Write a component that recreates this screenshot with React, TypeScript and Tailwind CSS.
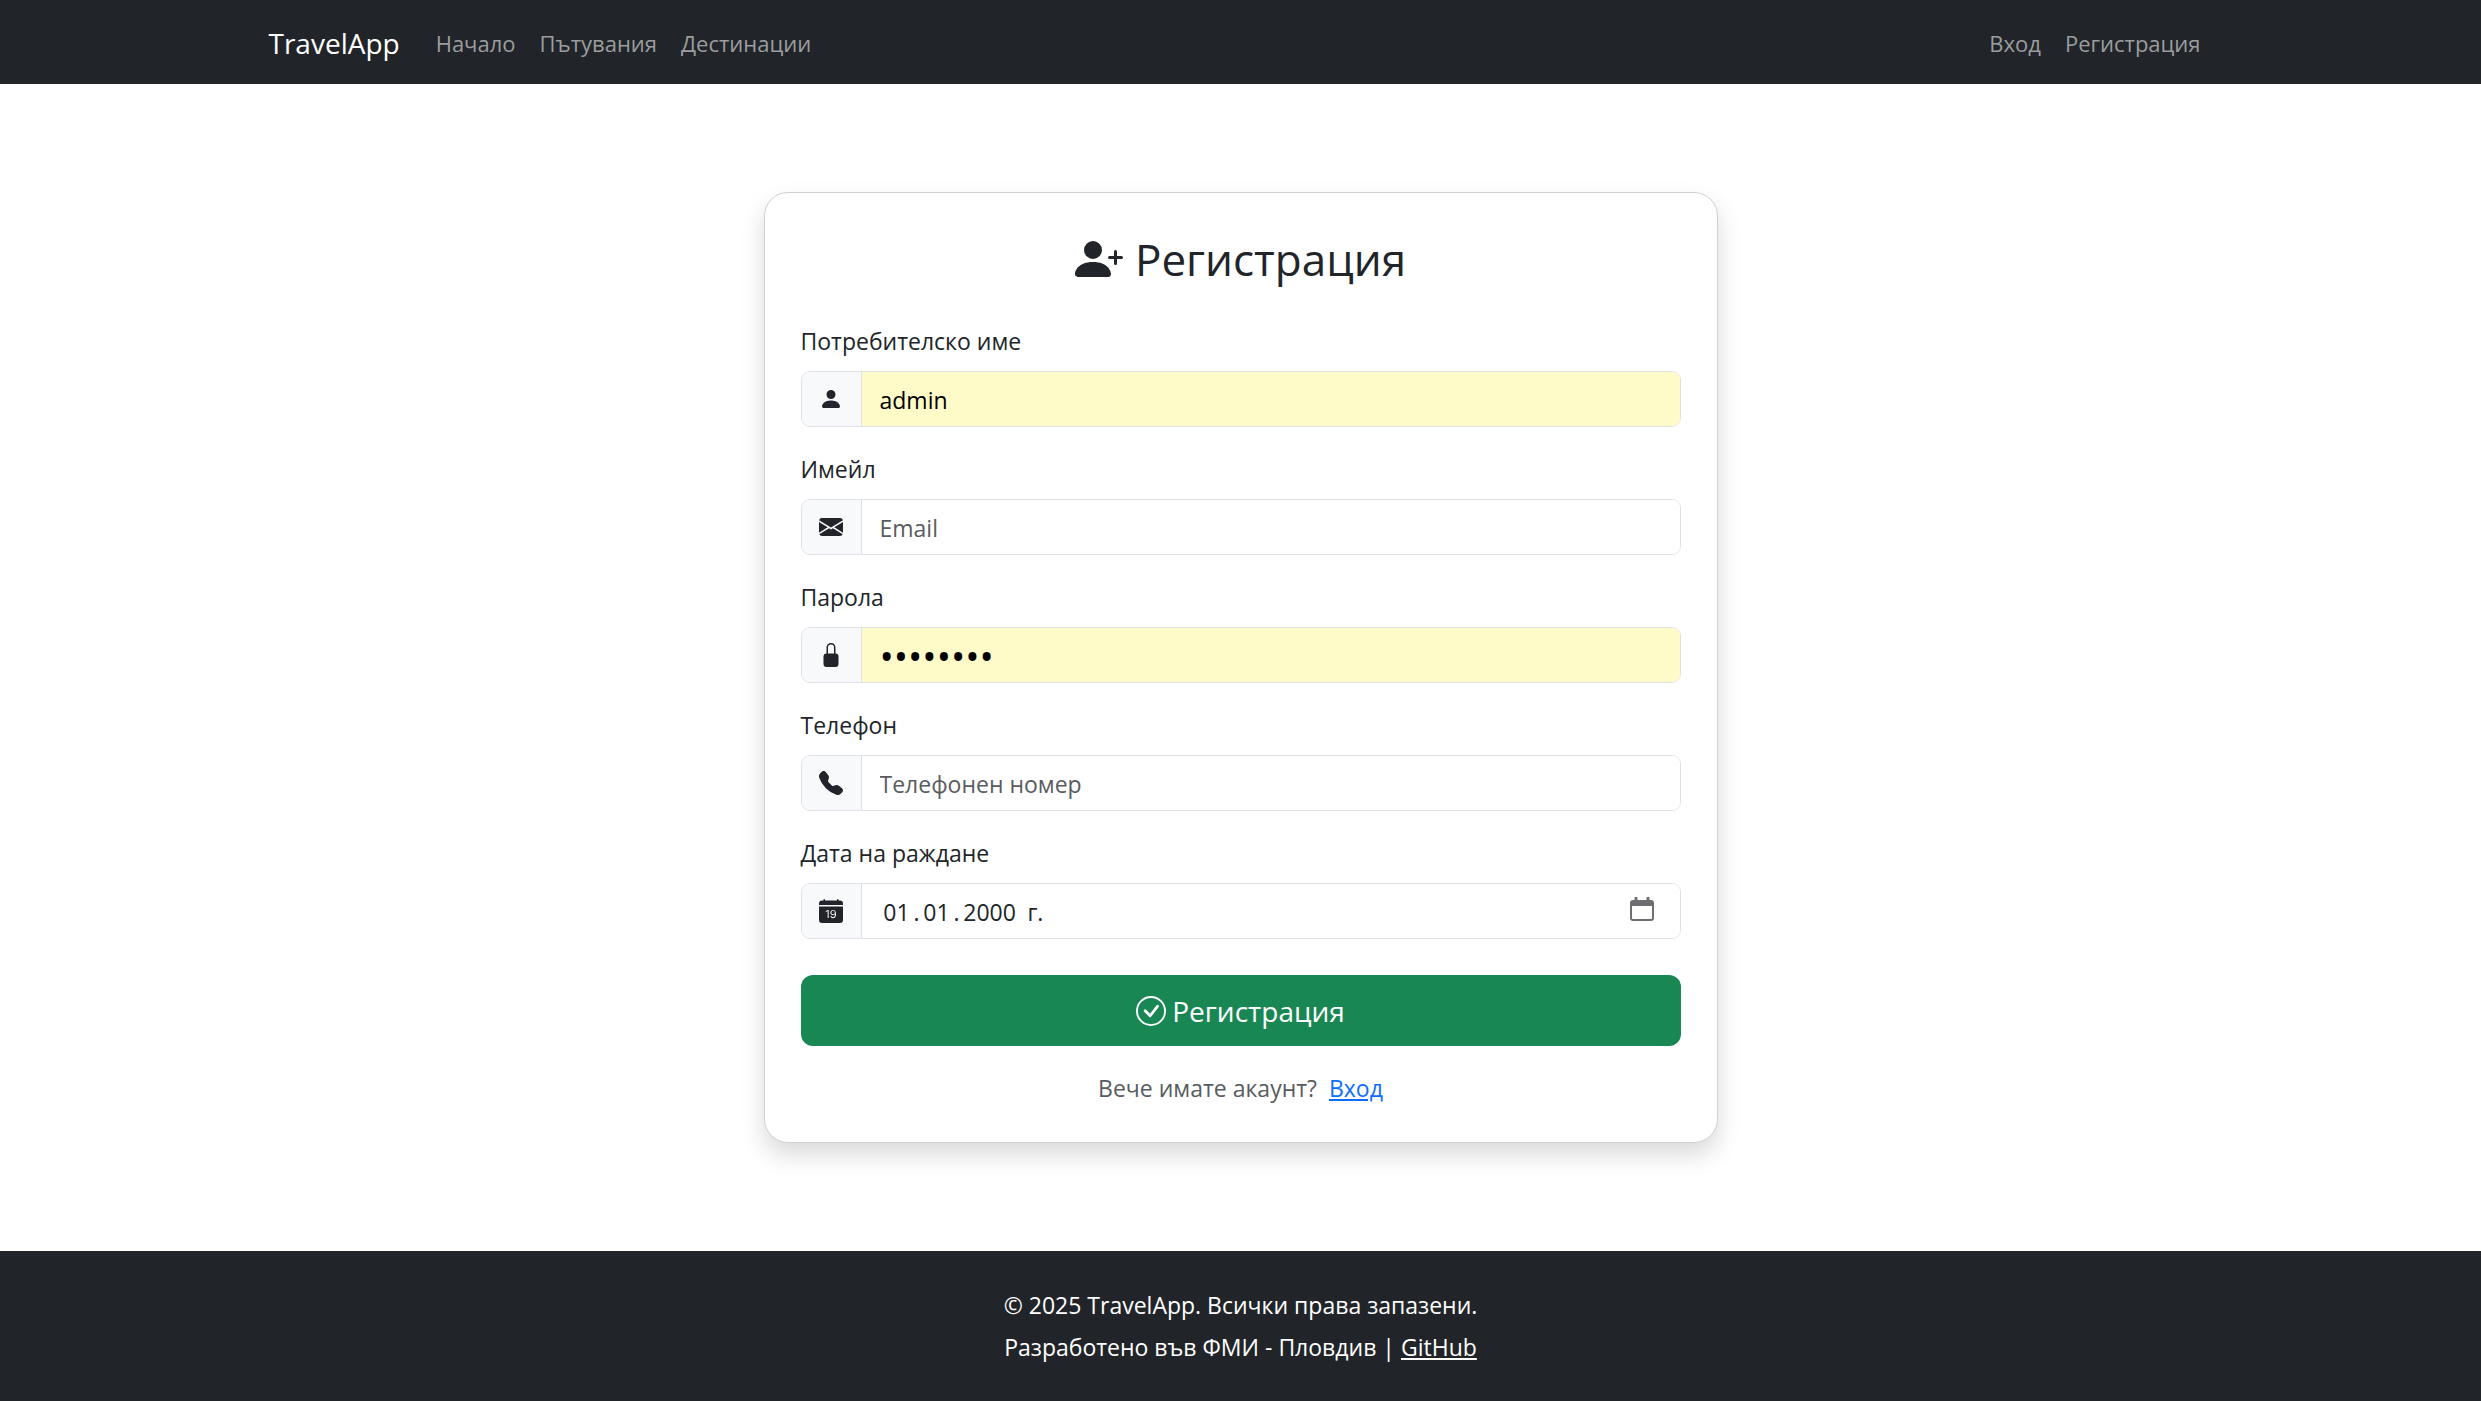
import type { InputHTMLAttributes, ReactNode } from "react";
import {
  BsCalendarDateFill,
  BsCheckCircle,
  BsEnvelopeFill,
  BsLockFill,
  BsPersonFill,
  BsPersonPlusFill,
  BsTelephoneFill,
} from "react-icons/bs";

type FieldProps = InputHTMLAttributes<HTMLInputElement> & {
  id: string;
  label: string;
  icon: ReactNode;
  filled?: boolean;
  action?: ReactNode;
};

function Field({ id, label, icon, filled, action, ...input }: FieldProps) {
  return (
    <div className="mb-6">
      <label htmlFor={id} className="mb-3 block">
        {label}
      </label>
      <div className="flex h-14 overflow-hidden rounded-[9px] border border-[#dee2e6]">
        <span className="flex w-[60px] shrink-0 items-center justify-center border-r border-[#dee2e6] bg-[#f8f9fa] text-2xl">
          {icon}
        </span>
        <div className={filled ? "flex min-w-0 flex-1 items-center bg-[#fffbc8] text-black" : "flex min-w-0 flex-1 items-center bg-white"}>
          <input
            id={id}
            className={
              input.type === "password"
                ? "h-full min-w-0 flex-1 bg-transparent px-[18px] pt-0.5 text-[38px] outline-none"
                : "h-full min-w-0 flex-1 bg-transparent px-[18px] pt-0.5 outline-none placeholder:text-[#595c5f]"
            }
            {...input}
          />
          {action}
        </div>
      </div>
    </div>
  );
}

function PickerIcon() {
  return (
    <svg viewBox="0 0 24 24" className="size-6" fill="#6e6f73" aria-hidden="true">
      <path
        fillRule="evenodd"
        d="M4.500 1.200a1.500 1.500 0 0 1 3 0V3h9V1.200a1.500 1.500 0 0 1 3 0V3H21a3 3 0 0 1 3 3v15a3 3 0 0 1-3 3H3a3 3 0 0 1-3-3V6a3 3 0 0 1 3-3h1.500zM2 9v12a1 1 0 0 0 1 1h18a1 1 0 0 0 1-1V9z"
      />
    </svg>
  );
}

const navLink = "px-3 py-3 text-[#9b9d9e] hover:text-white";

export default function App() {
  return (
    <div className="flex min-h-screen flex-col bg-white font-['Open_Sans','Noto_Sans',sans-serif] text-[23px] leading-9 text-[#212529]">
      <header className="bg-[#212529]">
        <nav className="mx-auto flex h-[84px] max-w-[1980px] items-center px-[18px] pt-0.5 text-[22px]">
          <a href="#" className="mr-6 text-[28px] text-white">
            TravelApp
          </a>
          <a href="#" className={navLink}>Начало</a>
          <a href="#" className={navLink}>Пътувания</a>
          <a href="#" className={navLink}>Дестинации</a>
          <a href="#" className={`${navLink} ml-auto`}>Вход</a>
          <a href="#" className={navLink}>Регистрация</a>
        </nav>
      </header>

      <main className="flex flex-1 items-center justify-center">
        <section className="w-full max-w-[954px] rounded-3xl border border-[#d0d1d2] bg-white p-9 shadow-[0_12px_24px_rgba(0,0,0,0.15)]">
          <h1 className="mb-9 flex items-center justify-center gap-3 pt-0.5 text-[44px] leading-[56px]">
            <BsPersonPlusFill className="size-12" aria-hidden="true" />
            <span>Регистрация</span>
          </h1>
          <form onSubmit={(e) => e.preventDefault()}>
            <Field id="username" label="Потребителско име" icon={<BsPersonFill />} filled defaultValue="admin" />
            <Field id="email" label="Имейл" icon={<BsEnvelopeFill />} type="email" placeholder="Email" />
            <Field id="password" label="Парола" icon={<BsLockFill />} filled type="password" defaultValue="password" />
            <Field id="phone" label="Телефон" icon={<BsTelephoneFill />} type="tel" placeholder="Телефонен номер" />
            <Field
              id="birthdate"
              label="Дата на раждане"
              icon={<BsCalendarDateFill />}
              defaultValue={"\u200901\u2009.\u200901\u2009.\u20092000\u2002г."}
              action={
                <button type="button" aria-label="Избор на дата" className="mr-[26px] mb-1">
                  <PickerIcon />
                </button>
              }
            />
            <button
              type="submit"
              className="mt-9 flex h-[71px] w-full items-center justify-center gap-[6px] rounded-xl bg-[#198754] text-[28px] text-white"
            >
              <BsCheckCircle className="size-[30px]" aria-hidden="true" />
              Регистрация
            </button>
          </form>
          <p className="mt-6 text-center text-[#595c5f]">
            Вече имате акаунт?
            <a href="#" className="ml-3 text-[#0d6efd] underline">Вход</a>
          </p>
        </section>
      </main>

      <footer className="bg-[#212529] py-9 text-center text-white">
        <p className="mb-[6px]">© 2025 TravelApp. Всички права запазени.</p>
        <p>
          Разработено във ФМИ - Пловдив | <a href="#" className="underline">GitHub</a>
        </p>
      </footer>
    </div>
  );
}
